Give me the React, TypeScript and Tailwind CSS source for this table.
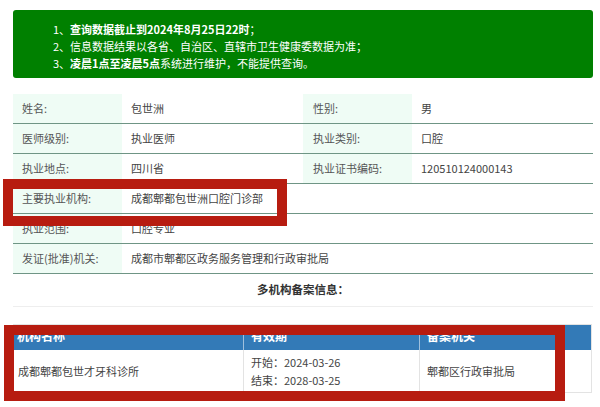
import React from "react";

const font = { fontFamily: '"Noto Sans CJK SC", "Noto Sans", sans-serif' };

interface Row {
  label: string;
  value: string;
  label2?: string;
  value2?: string;
}

const rows: Row[] = [
  { label: "姓名:", value: "包世洲", label2: "性别:", value2: "男" },
  { label: "医师级别:", value: "执业医师", label2: "执业类别:", value2: "口腔" },
  { label: "执业地点:", value: "四川省", label2: "执业证书编码:", value2: "120510124000143" },
  { label: "主要执业机构:", value: "成都郫都包世洲口腔门诊部" },
  { label: "执业范围:", value: "口腔专业" },
  { label: "发证(批准)机关:", value: "成都市郫都区政务服务管理和行政审批局" },
];

export default function App() {
  return (
    <div className="relative h-[407px] w-[600px] overflow-hidden bg-white text-[#555]" style={font}>
      <div className="pl-[13px] pt-[10px]">
        {/* Notice */}
        <div className="h-[68px] w-[580px] rounded-[3px] bg-[#008000] pl-[40px] pt-[11px] text-[11px] leading-[17px] text-white">
          <div>
            1、<span className="font-bold">查询数据截止到2024年8月25日22时</span>；
          </div>
          <div>2、信息数据结果以各省、自治区、直辖市卫生健康委数据为准；</div>
          <div>
            3、<span className="font-bold">凌晨1点至凌晨5点</span>系统进行维护，不能提供查询。
          </div>
        </div>

        {/* Doctor info */}
        <div className="mt-[16px] w-[580px] text-[11px]">
          {rows.map((r) => (
            <div
              key={r.label}
              className="grid h-[30px] grid-cols-[109px_181px_109px_181px] border-b border-[#6f9585]"
            >
              <div className="flex items-center bg-[#effcf5] pl-[9px] text-[#555]">{r.label}</div>
              {r.label2 ? (
                <>
                  <div className="flex items-center pl-[9px] text-[#444]">{r.value}</div>
                  <div className="flex items-center bg-[#effcf5] pl-[10px]">{r.label2}</div>
                  <div className="flex items-center pl-[9px] text-[#444]">{r.value2}</div>
                </>
              ) : (
                <div className="col-span-3 flex items-center pl-[9px] text-[#444]">{r.value}</div>
              )}
            </div>
          ))}
          <div className="flex h-[33px] items-center justify-center border-b border-[#eeeeee] text-[11.5px] font-bold text-[#333]">
            多机构备案信息：
          </div>
        </div>

        {/* Multi-institution table */}
        <div className="mt-[17px] w-[579px] border border-[#e3e3e3] text-[11px]">
          <div className="grid h-[25px] grid-cols-[230px_176px_173px] bg-[#337ab7] text-[12px] font-bold text-white">
            <div className="flex items-center border-r border-[#9fc0dd] pb-[3px] pl-[3px]">机构名称</div>
            <div className="flex items-center border-r border-[#9fc0dd] pb-[3px] pl-[7px]">有效期</div>
            <div className="flex items-center pb-[3px] pl-[7px]">备案机关</div>
          </div>
          <div className="grid h-[42px] grid-cols-[230px_176px_173px] text-[#444]">
            <div className="flex items-center border-r border-[#e3e3e3] pl-[4px]">成都郫都包世才牙科诊所</div>
            <div className="flex flex-col justify-center border-r border-[#e3e3e3] pl-[7px] leading-[18px]">
              <div>开始：2024-03-26</div>
              <div>结束：2028-03-25</div>
            </div>
            <div className="flex items-center pl-[7px]">郫都区行政审批局</div>
          </div>
        </div>
      </div>

      {/* Red annotation boxes */}
      <div className="absolute left-[3px] top-[179px] h-[47px] w-[284px] border-[10px] border-[#b71c10]" />
      <div className="absolute left-[4px] top-[325px] h-[76px] w-[561px] border-[10px] border-[#b71c10]" />
    </div>
  );
}
